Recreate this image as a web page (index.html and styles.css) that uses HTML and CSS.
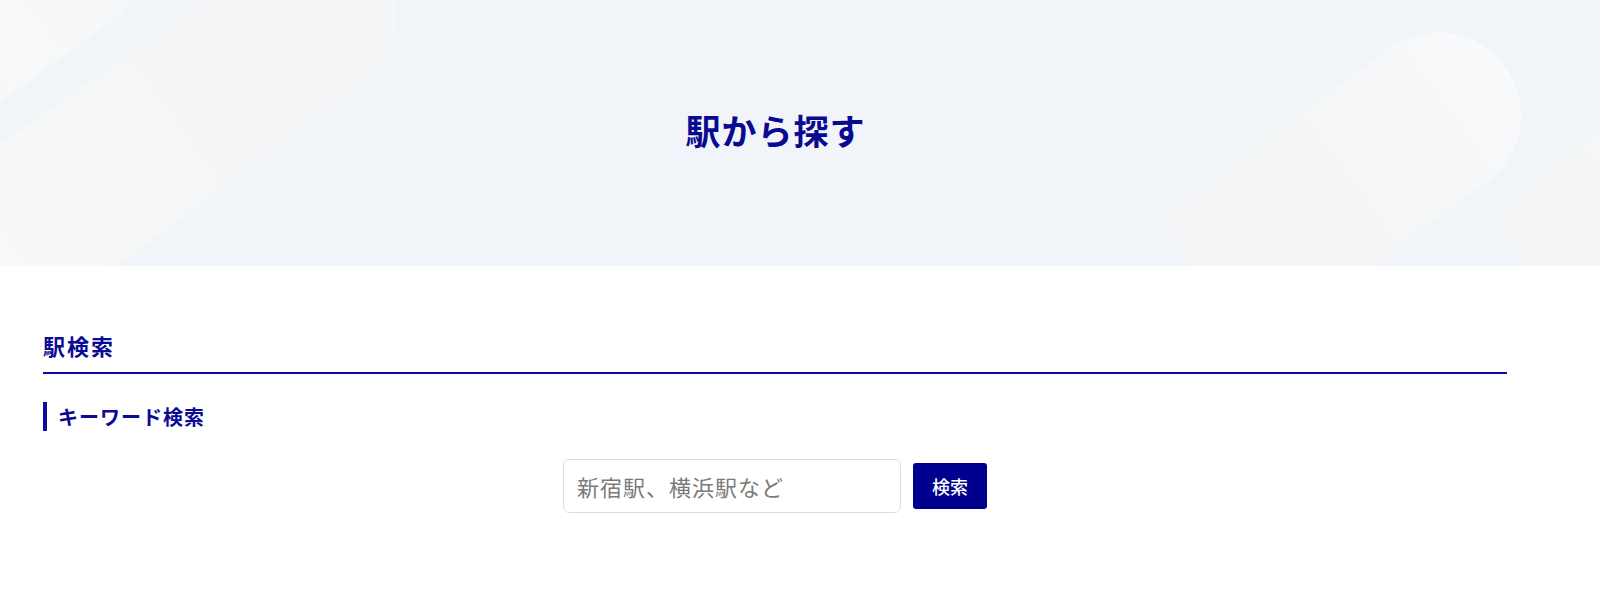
FILE: index.html
```html
<!DOCTYPE html>
<html lang="ja">
<head>
<meta charset="utf-8">
<title>駅から探す</title>
<link rel="stylesheet" href="styles.css">
</head>
<body>
<header class="hero">
  <div class="shape s-topleft"></div>
  <div class="shape s-band"></div>
  <div class="shape s-pill"></div>
  <div class="shape s-right"></div>
  <div class="hero-inner">
    <h1 class="hero-title">駅から探す</h1>
  </div>
</header>
<main class="container">
  <h2 class="section-title">駅検索</h2>
  <h3 class="sub-title">キーワード検索</h3>
  <form class="search" onsubmit="return false;">
    <input class="search-input" type="text" placeholder="新宿駅、横浜駅など">
    <button class="search-btn" type="submit">検索</button>
  </form>
</main>
</body>
</html>
```
FILE: styles.css
```css
* { box-sizing: border-box; }
html, body { margin: 0; padding: 0; }
body {
  font-family: "Noto Sans CJK JP", "Noto Sans", sans-serif;
  background: #fff;
  color: #0a0a94;
  overflow: hidden;
}

/* hero */
.hero {
  position: relative;
  height: 266px;
  background: #f1f4f8;
  overflow: hidden;
}
.shape {
  position: absolute;
  height: 166px;
  transform-origin: 0 0;
  transform: rotate(-36deg);
}
.s-topleft {
  left: -260px;
  top: 86px;
  width: 419px;
  border-radius: 0 83px 83px 0;
  background: linear-gradient(90deg, rgba(247,248,248,0.7) 0%, rgba(248,249,249,0.9) 60%, rgba(247,248,249,0.8) 100%);
}
.s-band {
  left: -162px;
  top: 263px;
  width: 611px;
  border-radius: 0 83px 83px 0;
  background: linear-gradient(90deg, rgba(249,250,251,0.95) 0%, rgba(247,248,247,0.9) 35%, rgba(245,246,247,0.9) 60%, rgba(245,246,248,0.9) 100%);
}
.s-pill {
  left: 1157px;
  top: 217px;
  width: 370px;
  border-radius: 20px 83px 83px 20px;
  background: linear-gradient(90deg, rgba(243,245,246,0.9) 0%, rgba(245,246,245,0.9) 40%, rgba(246,247,248,0.95) 70%, rgba(249,250,251,1) 100%);
}
.s-right {
  left: 1487px;
  top: 213px;
  width: 400px;
  height: 240px;
  border-radius: 22px;
  background: linear-gradient(90deg, rgba(244,245,246,0.9) 0%, rgba(246,247,246,0.95) 50%, rgba(248,249,250,1) 100%);
}
.hero-inner {
  position: relative;
  width: 1464px;
  margin-left: 43px;
  height: 100%;
  display: flex;
  align-items: center;
  justify-content: center;
}
.hero-title {
  margin: 0 0 6px;
  font-size: 35px;
  line-height: 44px;
  font-weight: 700;
  color: #0a0a91;
  letter-spacing: 1px;
  text-indent: 1px;
}

/* content */
.container {
  width: 1464px;
  margin-left: 43px;
  padding-top: 64px;
}
.section-title {
  margin: 0;
  font-size: 22px;
  font-weight: 700;
  color: #0a0a94;
  letter-spacing: 2px;
  line-height: 30px;
  padding-bottom: 12px;
  border-bottom: 2px solid #0b0b9c;
}
.sub-title {
  margin: 28px 0 0;
  font-size: 20px;
  font-weight: 700;
  color: #0a0a94;
  letter-spacing: 1px;
  line-height: 29px;
  padding-left: 11px;
  border-left: 4px solid #0b0b9c;
}
.search {
  display: flex;
  justify-content: center;
  align-items: center;
  gap: 12px;
  margin-top: 28px;
}
.search-input {
  width: 338px;
  height: 54px;
  border: 1px solid #dedede;
  border-radius: 6px;
  padding: 0 13px;
  font-family: "Noto Sans CJK JP", sans-serif;
  font-size: 22px;
  letter-spacing: 1px;
  color: #333;
  outline: none;
}
.search-input::placeholder { color: #7a7a7a; }
.search-btn {
  width: 74px;
  height: 46px;
  border: none;
  border-radius: 3px;
  background: #00008f;
  color: #fff;
  font-family: "Noto Sans CJK JP", sans-serif;
  font-size: 18px;
  font-weight: 500;
  cursor: pointer;
}
```
